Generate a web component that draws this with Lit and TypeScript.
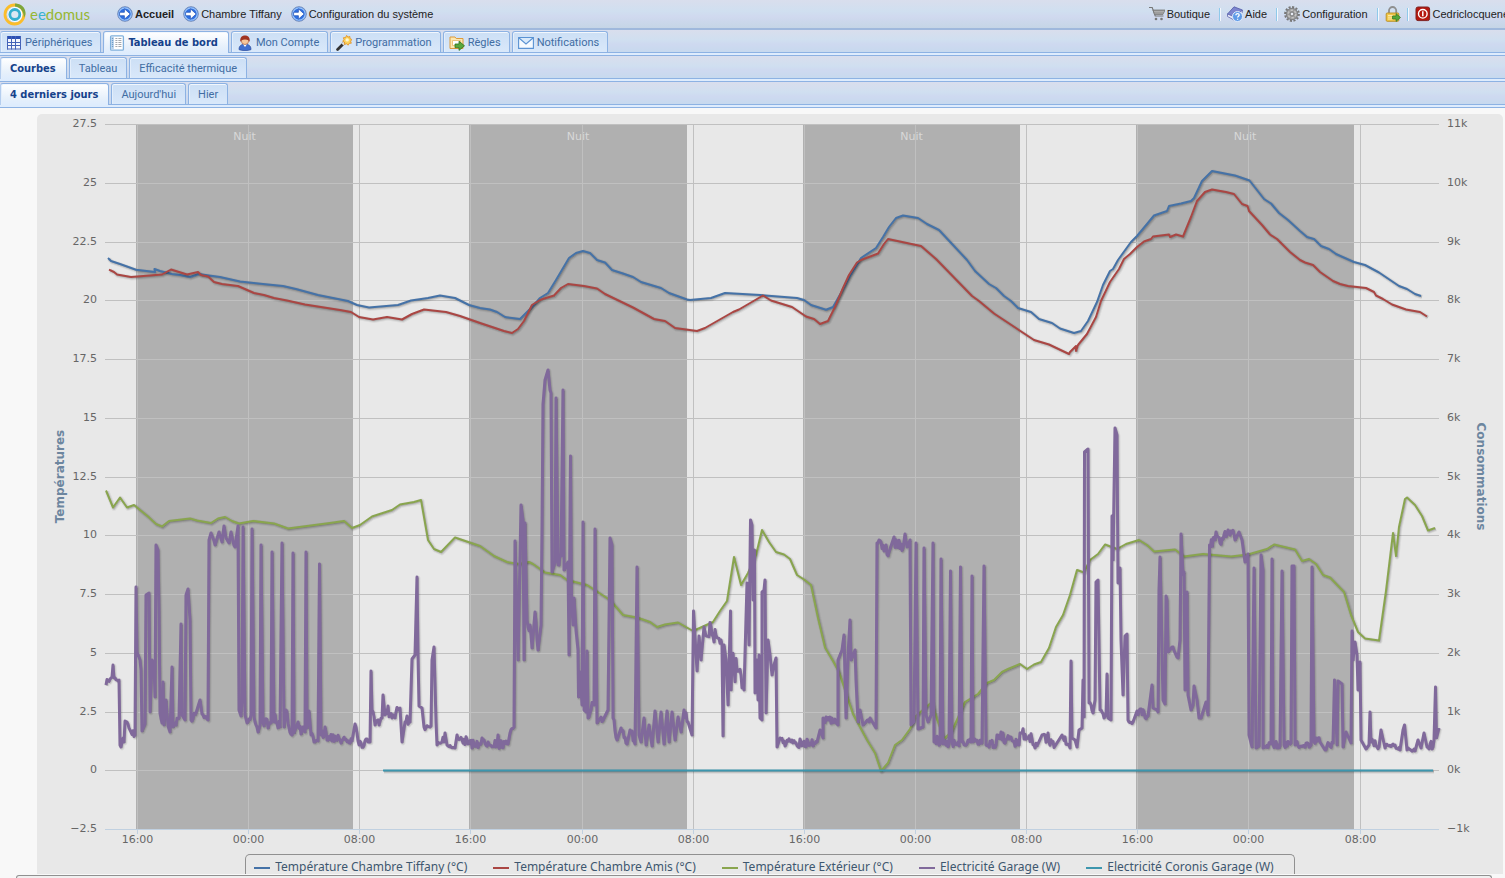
import { LitElement, html, svg, css, TemplateResult } from "lit";
import { customElement, property, state } from "lit/decorators.js";
import { classMap } from "lit/directives/class-map.js";

type Point = [number, number];
/** x, y and, for a restless stretch leading up to the point, its amplitude. */
type Sample = [number, number, number?];

/* Recorder grid in which every series is stored. */
const GRID = { left: 105, right: 1439, top: 124, bottom: 829 };

const parse = (text: string): Sample[] =>
  text
    .trim()
    .split(/\s+/)
    .map((p) => p.split(",").map(Number) as unknown as Sample);

/** Fills restless stretches with a repeatable jitter. */
function expand(samples: Sample[]): Point[] {
  let seed = 7;
  const random = () => {
    seed = (seed * 16807) % 2147483647;
    return seed / 2147483647;
  };
  const out: Point[] = [];
  let px = samples[0][0];
  let py = samples[0][1];
  for (const [x, y, amp] of samples) {
    if (amp) {
      const steps = Math.max(1, Math.round(x - px));
      for (let i = 1; i < steps; i++) {
        const k = i / steps;
        const r = random() * 2 - 1;
        const lift = random() > 0.88 ? amp : 0;
        out.push([px + (x - px) * k, py + (y - py) * k + r * amp - lift]);
      }
    }
    out.push([x, y]);
    px = x;
    py = y;
  }
  return out;
}

const TIFFANY = `108,258 111,261 120,264 127,266.5 136,269.7 155,272 154.5,269 160,271 172,274 180,275 190,277 199,274
209,275.5 220,277 240,281.5 263,284 283,286 296,289 318,295 348,301 357,305 369,307.5 398,305 411,300.5 428,298
440,295.5 455,298 469,305 480,308 490,309.5 497,312 505,317 520,319 527,312 533,306 540,298 548,293 556,280 569,258
576,253 583,251 590,253 597,260 605,262.5 612,270 623,273.5 633,277 641,282 661,288 669,293 687,299.5 690,300 711,298
725,293 760,295 797,298 804,300 811,305 826,309.7 833,307 841,293 850,276 861,258 876,248 883,237 889,227 896,218
903,215.5 918,218 927,224 939,230 953,245 967,260 975,271 989,284 996,288 1004,296 1011,301 1018,308 1031,312
1039,319 1052,323 1060,328.5 1074,333 1081,331 1088,321 1097,302 1103,285 1110,271 1113,269 1118,260 1131,242
1137,236 1147,224 1154,215.5 1167,211 1169,206 1181,203.5 1191,201 1194,198 1202,181 1205,178 1212,171 1235,175.5
1249.5,180.5 1264,199 1271,203.5 1279,213 1288,220 1300,231 1307,237 1314,239 1321,246 1329,249 1336,254 1354,262
1365,265 1379,272.5 1399,286 1407,289 1415,294 1421,296`;

const AMIS = `109,269.7 114,272 117,274.5 131,277 162,274.5 171,269.5 187,274.5 198,272 201,275 208,276.5 214,282 222,284
238,286 246,289.5 254,293 264,295 274,298 287,300.5 305,304.5 340,310 351,312 359,317 373,319.5 387,317 402,319.5
412,314 424,309.5 446,312 460,316 480,323 504,331 512,333 518,329 524,321 532,305 540,300 546,298 554,295.5 561,288
568,284 584,286 597,288.5 605,294 633,307.5 654,319 665,321 675,328 697,331 705,328 733,312 739,309.5 763,295.5
771,300.5 792,307 806,316.5 814,319 820,324 828,321 835,307 843,288 849,275 857,262.5 861,260 878,253.5 884,244
888,239 921,246 936,259 972,296 979,301 994,313.5 1034,340 1049,344.5 1069,354 1070,352 1076,346 1076,351 1078,345
1087,334 1096,317 1101,301 1110,282 1119,269 1124,259 1130,254 1137,247 1144,241.5 1151,239 1153,236.5 1169,234.5
1170,237 1176,234.5 1183,236.5 1191,217 1197,201 1205,192 1212,189.5 1226,192 1234,194 1242,204 1247.5,206 1249,211
1262,225 1270,234.5 1277,239 1290,252 1300,260 1305,262.5 1313,265 1320,272 1333,281 1340,284 1348,286 1366,288
1374,292 1376,295.5 1383,299 1392,304.5 1406,309.5 1420,312 1427,316.5`;

const EXTERIEUR = `106,490.5 113,507.5 120,497.5 127,507.5 134,505 148,516.5 156,524 162,526.5 169,521 190,518.5
197,520.5 211,523 218,518.5 225,517 232,521 239,523.5 253,521 274,523.5 288,528.5 330,523 344,521 352,528 360,525
372,516.5 392,510 400,504.5 414,502 421,500 428,540 434,549 441,552 455,537.5 480,546 494,556 507,562 519,564 529,562
533,564 545,572.5 560,575 567,580 587,585 610,600 623,615 637,617.5 650,622 657,627 665,624.5 678,622.5 693,631
713,622 720,611 727,601 734,557 741,585 748,573 756,555 762,530 769,542 776,552 784,554.5 790,559 797,575 804,579.5
811,585 818,618 825,647.5 833,661 839,672 846,693 853,714 860,727 867,740 875,753 881,771 888,763 895,745 902,740
910,729 916,716 932,702 937,719 944,739 952,731 965,702 978,694 987,683 994,680 1002,672 1008,669 1020,664 1027,669
1034,664.5 1041,662 1049,648 1056,627 1063,615 1070,595 1077,570 1084,572.5 1090,560 1098,554 1105,544.5 1117,549
1126,544 1139,540 1147,545 1154,551.5 1175,549.5 1184,556.5 1203,554 1231,556.5 1248,554.5 1267,549 1274,544.5
1295,549.5 1302,561 1309,559 1316,564 1323,575 1330,577.5 1344,592 1351,615 1358,632 1365,638.5 1379,640.5 1386,591
1393,533 1396,556 1399,527 1405,499 1407,497.5 1415,505 1422,516 1428,530.5 1435,528`;

const GARAGE = `106,685 110,679,2 112,677 113,665 114,678 119,680,2 120,745 121,747 123,738 124,742 125,721 127,722
130,730,2 135,735,3 136,587 137,652 140,660 141,670 142,731 145,724 146,595 149,593 150,712 152,660 154,665 155,697
156,545 158,550 159,610 160,713 162,723,2 163,682 164,725 166,700 168,726 170,732 172,667 173,727 179,718,4 181,624
182,715 185,720 186,595 188,589 190,620 191,720 196,713,3 200,700 202,714 208,720,2 209,540 211,533 215,545,3 219,532
222,542 224,526 226,538 229,543 231,532 235,547,3 238,526 239,710 241,716 242,700 243,527 245,715 247,723 251,715,3
252,529 254,717 258,732,3 260,725 261,545 263,723 271,723,5 272,552 274,722 280,727,5 282,543 284,727 286,710
289,728,5 292,735,4 293,553 294,733 298,722 301,734,3 305,732,3 306,552 307,728 309,711 311,735 314,742,2 318,741,2
319.5,564 321,735 352,741,5 355,724 359,745,4 368,742,4 370,742 371,671 372,710 375,725,4 382,718,4 383,695 385,715
392,718,6 398,710,4 400,708 402,742 405,722 410,722,4 412,659 415,655 417,577 418,655 419,706 422,708 424,727
431,726,3 432,660 434,647 436,722 437,745 444,742,4 445,733 447,745 455,748,1 457,735 468,744,4 488,742,5 500,744,5
508,744,4 510,733 514,727,2 515,541 518,660 521,505 523,520 524,660 525,523 527,620 531,635,8 532,648 535,612
538,650,6 541,625 542,530 543,404 545,380 548,370 550,390 551,393 552,572 555,562 556,398 558,565 561,556,5 563,390
564,570 568,562 569,655 570.5,456 571.5,600 573,625 574,598 576,630 578,650 578.5,697 580,672 582,705 583,522 584,710
586,712 587,651 588,718 593,704,5 594,705 595,529 597,723 604,718,3 608,710 610,538 612,545 613,718 617,740,3 621,728
627,744,3 630,730 635,744,3 637,567 639,735 641,742 644,718 646,745 649,725 652,746 655,711 658,742 661,712 664,744
667,711 669,742 672,712 675,740 678,717 681,732 684,710 688,722,7 692,735 693.5,611 697,671 699,636 701,660 704,627
721,640,10 722,645 723,736 724,645 726,660 728,705 730.5,611 731,690 732,660 739,670,20 744,690,8 747,583 749,645
750.5,520 752,525 753,600 754.5,550 755,693 757,660 758,700 759,655 760,718 762,720 762,592 764,590 765,580 766,713
768,640 770,655 772,675 774,665 776,658 777,747 780,738 785,746,4 792,740,5 803,744,5 817,742,5 820,730 823,738
823,718 836,723,4 838,725 838,660 842,650 844,635 846,718 848,655 850,620 851,660 855,650 856,680 858,722 860,710
863,725 870,718,3 876,728 877,543 889,552,5 893,540 903,548,6 905,534 907,547,2 910,540 911,725 914,722 916,543
918,729 923,727 924,548 926,715 928,722 931,715 933,543 934,742 940,744,4 941,559 943,744 949,744,4 950.5,571 952,742
959,746,4 960.5,567 962,742 971,742,4 972,576 973,742 982,743,4 984,566 986,745 996,745,3 997,735 1019,745,5 1020,733
1037,746,4 1042,735 1055,746,4 1062,735 1070,748,3 1071,661 1072,738 1075,740 1077,747 1079,730 1082,728 1083,680
1084,717 1084.5,452 1088,449 1089,703 1093,713,3 1095,700 1096,582 1098,580 1100,710 1104,718,3 1106,715 1107,674
1108,718 1111,720 1112,516 1113,560 1115,428 1117,435 1118,583 1120,568 1121,640 1123,695 1125,636 1127,634 1128,720
1133,722,3 1137,711 1148,716,4 1152,685 1153,708 1157,710 1158,712 1159,590 1160,557 1161,600 1162,655 1163,700
1165,704 1166,596 1167,600 1168,652 1172,647 1178,658,2 1180,640 1181,534 1183,575 1184,572 1185,690 1187,592
1188,695 1191,710 1193,705 1194,686 1197,700 1199,718 1201,718 1206,702 1208,715 1209.5,545 1215,540,4 1216,532
1220,543,3 1228,530,4 1236,538,4 1239,532 1242,540 1245,562 1248,554 1249,735 1252,747 1254,568 1256,748 1259,746
1261,555 1263,570 1263,748 1271,744,3 1272,559 1273,744 1280,746,4 1282,571 1284,745 1291,743,3 1292,566 1294,566
1295,745 1311,745,3 1312,567 1314,742 1320,742,4 1325,750 1333,743,3 1334.5,680 1337,745 1338,681 1342,684 1343,747
1346,732 1351,743 1352,631 1353,660 1355,642 1357,655 1358,690 1360,662 1361,740 1366,749 1369,745 1370,712 1371,742
1379,747,3 1381,730 1385,748 1393,744,3 1400,750,2 1403,730 1404.5,725 1407,750 1415,751,2 1418,740 1421,748 1424,733
1427,747 1433,747,3 1434,740 1435.5,687 1436.5,738 1439,728`;

const SERIES = [
  { name: "Température Chambre Tiffany (°C)", color: "#4572a7", width: 2, points: expand(parse(TIFFANY)) },
  { name: "Température Chambre Amis (°C)", color: "#aa4643", width: 2, points: expand(parse(AMIS)) },
  { name: "Température Extérieur (°C)", color: "#89a54e", width: 2, points: expand(parse(EXTERIEUR)) },
  { name: "Electricité Garage (W)", color: "#80699b", width: 3, points: expand(parse(GARAGE)) },
  { name: "Electricité Coronis Garage (W)", color: "#3d96ae", width: 2, points: expand(parse("383,770.5 1433,770.5")) },
];

const NIGHTS: Point[] = [[136, 353], [469, 687], [803, 1020], [1136, 1354]];
const HOURS = ["16:00", "00:00", "08:00"];
const LEFT_TICKS = ["27.5", "25", "22.5", "20", "17.5", "15", "12.5", "10", "7.5", "5", "2.5", "0", "−2.5"];
const RIGHT_TICKS = ["11k", "10k", "9k", "8k", "7k", "6k", "5k", "4k", "3k", "2k", "1k", "0k", "−1k"];
const SHADOW = [[5, 0.05], [3, 0.1], [1, 0.15]];

@customElement("temperature-chart")
export class TemperatureChart extends LitElement {
  @state() private width = 1466;
  @state() private height = 740;
  private observer?: ResizeObserver;

  static styles = css`
    :host {
      display: flex;
      flex-direction: column;
      min-height: 0;
      background: #e8e8e8;
      border-radius: 5px 5px 0 0;
      font-family: "DejaVu Sans", Verdana, sans-serif;
    }
    .plot {
      flex: 1;
      min-height: 0;
      overflow: hidden;
    }
    svg {
      display: block;
    }
    .night { fill: #b0b0b0; }
    .grid { stroke: #c0c0c0; shape-rendering: crispEdges; }
    .axis { stroke: #c0d0e0; shape-rendering: crispEdges; }
    .tick { font-size: 11px; fill: #666; }
    .night-label { font-size: 11px; fill: #d8d8d8; text-anchor: middle; }
    .end { text-anchor: end; }
    .middle { text-anchor: middle; }
    .title { font-size: 12px; font-weight: bold; fill: #6d869f; text-anchor: middle; }
    .line, .shade { fill: none; stroke-linejoin: round; }
    .shade { stroke: #000; }
    .legend {
      display: flex;
      align-self: center;
      gap: 26px;
      margin: 0;
      padding: 5px 20px 0 8px;
      border: 1px solid #909090;
      border-bottom: 0;
      border-radius: 5px 5px 0 0;
      list-style: none;
      font: 12px/14px "Noto Sans", "Open Sans", sans-serif;
      color: #3e576f;
      white-space: nowrap;
    }
    .entry {
      display: flex;
      gap: 5px;
    }
    .swatch {
      width: 16px;
      height: 14px;
    }
  `;

  firstUpdated() {
    const plot = this.renderRoot.querySelector(".plot")!;
    this.observer = new ResizeObserver(([entry]) => {
      this.width = entry.contentRect.width;
      this.height = entry.contentRect.height;
    });
    this.observer.observe(plot);
  }

  disconnectedCallback() {
    super.disconnectedCallback();
    this.observer?.disconnect();
  }

  render() {
    const left = 68;
    const right = this.width - 64;
    const top = 10;
    const bottom = this.height - 25;
    const sx = (right - left) / (GRID.right - GRID.left);
    const sy = (bottom - top) / (GRID.bottom - GRID.top);
    const x = (v: number) => left + (v - GRID.left) * sx;
    const y = (v: number) => top + (v - GRID.top) * sy;
    const rows = LEFT_TICKS.map((_, i) => Math.floor(top + 0.5 + ((bottom - top) * i) / 12) + 0.5);
    const columns = Array.from({ length: 12 }, (_, i) => Math.floor(x(137.4 + i * 111.15)) + 0.5);
    const path = (points: Point[]) =>
      "M" + points.map(([a, b]) => `${x(a).toFixed(1)} ${y(b).toFixed(1)}`).join("L");

    return html`
      <div class="plot">
        <svg width=${this.width} height=${this.height} role="img" aria-label="Températures et consommations">
          ${NIGHTS.map(([a, b]) => svg`
            <rect class="night" x=${x(a)} y=${top} width=${x(b) - x(a)} height=${bottom - top}></rect>
            <text class="night-label" x=${x((a + b) / 2)} y=${top + 16}>Nuit</text>`)}
          ${columns.map((c) => svg`<line class="grid" x1=${c} x2=${c} y1=${top} y2=${bottom}></line>`)}
          ${rows.map((r) => svg`<line class="grid" x1=${left} x2=${right} y1=${r} y2=${r}></line>`)}
          <line class="axis" x1=${left} x2=${right} y1=${rows[12]} y2=${rows[12]}></line>
          ${columns.map((c, i) => svg`
            <line class="axis" x1=${c} x2=${c} y1=${bottom} y2=${bottom + 5}></line>
            <text class="tick middle" x=${c} y=${bottom + 14}>${HOURS[i % 3]}</text>`)}
          ${rows.map((r, i) => svg`
            <text class="tick end" x=${left - 8} y=${Math.floor(r) + 3}>${LEFT_TICKS[i]}</text>
            <text class="tick" x=${right + 8} y=${Math.floor(r) + 3}>${RIGHT_TICKS[i]}</text>`)}
          <text class="title" transform="translate(27 ${(top + bottom) / 2}) rotate(-90)">Températures</text>
          <text class="title" transform="translate(${right + 38} ${(top + bottom) / 2}) rotate(90)">Consommations</text>
          ${SERIES.map((s) => {
            const d = path(s.points);
            return svg`
              ${SHADOW.map(([w, o]) => svg`<path class="shade" transform="translate(1 1)" d=${d} stroke-width=${w} stroke-opacity=${o}></path>`)}
              <path class="line" d=${d} stroke=${s.color} stroke-width=${s.width}></path>`;
          })}
        </svg>
      </div>
      <ul class="legend">
        ${SERIES.map((s) => html`
          <li class="entry">
            <svg class="swatch" viewBox="0 0 16 14" aria-hidden="true"><path d="M0 8h16" stroke=${s.color} stroke-width="2" /></svg>
            <span>${s.name}</span>
          </li>`)}
      </ul>
    `;
  }
}

const icon = (body: TemplateResult) =>
  html`<svg width="16" height="16" viewBox="0 0 16 16" fill="none" aria-hidden="true">${body}</svg>`;

const ICONS = {
  arrow: icon(svg`
    <circle cx="8" cy="8" r="7.3" fill="#2f6fe0" stroke="#7a8fb8" />
    <circle cx="8" cy="8" r="6.2" stroke="#9cc6fa" stroke-width="1.2" />
    <path d="M2.600 6.300h4.800V2.800L13.200 8l-5.800 5.200V9.700H2.600z" fill="#fff" stroke="#1d4fb6" stroke-width=".7" />`),
  cart: icon(svg`
    <path d="M0 1.500h3.200l3 8.500h8.300" stroke="#777" stroke-width="1.200" />
    <path d="M4 4h12l-2 4.400H5.600z" fill="#8e8e8e" stroke="#777" stroke-width=".8" />
    <path d="M5 5.400h10M5.500 7h9" stroke="#c8c8c8" stroke-width=".6" />
    <circle cx="7" cy="13" r="1.300" fill="#777" /><circle cx="12.500" cy="13" r="1.300" fill="#777" />`),
  book: icon(svg`
    <path d="M.5 8 7 .8 15.500 4 9 12z" fill="#7c85cf" stroke="#535ba6" stroke-width=".8" />
    <path d="M.5 8v2.500l7.500 4 7.300-8V4L9 11.500z" fill="#e7eaf8" stroke="#5d65ae" stroke-width=".8" />
    <circle cx="10.500" cy="10.500" r="5" fill="#5f9be8" stroke="#dfeafb" />
    <path d="M8.900 9.200c0-2.300 3.300-2.100 3.300-.2 0 1.200-1.600 1.300-1.600 2.600M10.600 12.700v1.100" stroke="#fff" stroke-width="1.300" />`),
  gear: icon(svg`
    <circle cx="8" cy="8" r="6.900" stroke="#777" stroke-width="2" stroke-dasharray="2.100 1.500" />
    <circle cx="8" cy="8" r="5.700" fill="#9c9c9c" stroke="#707070" stroke-width=".8" />
    <circle cx="8" cy="8" r="3.800" stroke="#c2c2c2" stroke-width="1.600" stroke-dasharray="2.400 1.600" />
    <circle cx="8" cy="8" r="1.900" fill="#e8ecf4" stroke="#666" stroke-width=".8" />`),
  lock: icon(svg`
    <path d="M4 8V4.600a3.600 3.600 0 0 1 7.200 0V8" stroke="#8f8f8f" stroke-width="1.800" />
    <rect x="1.200" y="7" width="12.600" height="8.300" rx="1" fill="#f2c84b" stroke="#b98d1f" stroke-width=".9" />
    <path d="M3 9.500h5M3 11.200h5M3 13h5" stroke="#fbe9a8" />
    <path d="M7.500 10h3.600V7.600l4.400 3.900-4.400 3.900V13H7.500z" fill="#55a83b" stroke="#2f7420" stroke-width=".7" />`),
  power: icon(svg`
    <rect x="1" y="1" width="13.600" height="13.600" rx="2" fill="#b5170f" stroke="#7f2320" />
    <circle cx="7.800" cy="7.800" r="4.300" stroke="#fff" stroke-width="1.400" />
    <path d="M7.800 5.300v5" stroke="#fff" stroke-width="1.500" />`),
  grid: icon(svg`
    <rect x="1" y="1" width="14" height="13.500" fill="#f4f7fe" />
    <path d="M1 1h14v3H1z" fill="#2c50b4" />
    <path d="M1.500 1v13.500M5.500 1v13.500M9.500 1v13.500M14.500 1v13.500M1 7.500h14M1 10.500h14M1 14h14" stroke="#4463b8" />`),
  list: icon(svg`
    <rect x="1.600" y=".8" width="12.800" height="14.400" rx="1" fill="#fff" stroke="#7fb0dc" stroke-width="1.300" />
    <path d="M2.200 1.500h2.600v13H2.200z" fill="#b6d0ea" />
    <path d="M6.400 3.500h2M9.400 3.500h3M6.400 5.500h2M9.400 5.500h3M6.400 7.500h2M9.400 7.500h3M6.400 9.500h2M9.400 9.500h3M6.400 11.500h2M9.400 11.500h3" stroke="#a3a7ad" />
    <path d="M2.900 3.500h1.300M2.900 5.500h1.300M2.900 7.500h1.300M2.900 9.500h1.300M2.900 11.500h1.300" stroke="#6e9cc8" />`),
  user: icon(svg`
    <path d="M2 14.600c0-4 2.400-5.400 6-5.400s6 1.400 6 5.400c-3 1.400-9 1.400-12 0z" fill="#3f6fd0" stroke="#2a4b9b" stroke-width=".7" />
    <path d="m6 9.300 2 2.600 2-2.600z" fill="#fff" />
    <circle cx="8" cy="5.800" r="3.700" fill="#f6c79c" stroke="#a2512f" stroke-width=".6" />
    <path d="M3.400 7C2.600 2 5.500.6 8 .6s5.400 1.400 4.600 6.400c-.6-1.600-1.600-2.600-4.600-2.600S4 5.400 3.400 7z" fill="#a03423" />`),
  wand: icon(svg`
    <path d="m1.600 14.400 7-7" stroke="#333" stroke-width="2.800" stroke-linecap="round" />
    <path d="m6.500 9.500 2-2" stroke="#ddd" stroke-width="2.600" />
    <path d="m10.600.4 1.300 1.700 2-.6.100 2.100 1.900.9-1.300 1.700.7 2-2.100.1-1 1.900-1.600-1.400-2 .6-.1-2.100-1.800-1 1.300-1.600-.6-2 2.100-.1z" fill="#fbd25a" stroke="#e38d1c" stroke-width=".8" />
    <circle cx="11.200" cy="4.900" r="1.700" fill="#fff6cf" />`),
  folder: icon(svg`
    <path d="M1 13.500V2h5l1.200 1.500H14v10z" fill="#fce8b2" stroke="#dc9b3c" />
    <path d="M3.500 5.500h8v5h-8z" fill="#fff" stroke="#e9b765" stroke-width=".8" />
    <path d="M6 9h4V6.200l5.500 4.600-5.500 4.600v-2.800H6z" fill="#5aa83d" stroke="#2f7420" stroke-width=".8" />`),
  mail: icon(svg`
    <path d="M.6 2.600h14.800v10.800H.6z" fill="#f5faff" stroke="#5b93d3" stroke-width="1.100" />
    <path d="M1 3l7 6 7-6" fill="#d9eafb" stroke="#5b93d3" stroke-width="1.100" />`),
};

interface Tab {
  label: string;
  icon?: TemplateResult;
}

@customElement("tab-strip")
export class TabStrip extends LitElement {
  @property({ attribute: false }) tabs: Tab[] = [];
  @property({ type: Number }) active = 0;

  static styles = css`
    :host {
      display: block;
      border-bottom: 1px solid #8db2e3;
      background: #deecfd;
      padding-bottom: 2px;
    }
    .strip {
      display: flex;
      gap: 2px;
      height: 23px;
      box-sizing: border-box;
      padding-top: 1px;
      border-bottom: 1px solid #8db2e3;
      background: linear-gradient(#d9deed, #d0dff0 45%, #ced9f0 65%, #c7d9ee);
    }
    .tab {
      display: flex;
      align-items: center;
      gap: 3px;
      height: 21px;
      box-sizing: border-box;
      padding: 1px 9px 0;
      border: 1px solid #8db2e3;
      border-bottom: 0;
      border-radius: 3px 3px 0 0;
      background: linear-gradient(#ccdff5, #d9e8fa);
      box-shadow: inset 0 1px #f2f7fd, inset 1px 0 #e3eefb;
      color: #416da3;
      font: 11px/20px Roboto, Tahoma, sans-serif;
      white-space: nowrap;
      cursor: pointer;
    }
    .tab:first-child {
      border-left-color: #b4cdee;
    }
    .with-icon {
      padding-left: 5px;
      padding-right: 8px;
    }
    .active {
      height: 22px;
      padding-top: 0;
      padding-right: 10px;
      background: linear-gradient(#fff, #e6f0fb 70%, #deecfd);
      color: #15428b;
      font: bold 11px/20px "DejaVu Sans Condensed", "DejaVu Sans", Tahoma, sans-serif;
      font-stretch: condensed;
    }
  `;

  render() {
    return html`<div class="strip" role="tablist">
      ${this.tabs.map((tab, i) => html`
        <button
          type="button"
          role="tab"
          aria-selected=${i === this.active}
          class=${classMap({ tab: true, active: i === this.active, "with-icon": !!tab.icon })}
          @click=${() => (this.active = i)}
        >${tab.icon}<span>${tab.label}</span></button>`)}
    </div>`;
  }
}

@customElement("app-root")
export class AppRoot extends LitElement {
  static styles = css`
    :host {
      display: flex;
      flex-direction: column;
      height: 100vh;
      overflow: hidden;
      background: #f8f8f8;
    }
    .header {
      display: flex;
      align-items: center;
      flex: none;
      height: 28px;
      border-bottom: 2px solid #9fb8dc;
      background: linear-gradient(#d9deed, #d0dff0 40%, #d0d9ef 60%, #c5d5e6);
      font: 11px/16px "Liberation Sans", Arial, sans-serif;
      white-space: nowrap;
    }
    .logo {
      display: flex;
      align-items: center;
      gap: 3px;
      width: 114px;
      padding-left: 3px;
      box-sizing: border-box;
      color: #96b732;
      font: 15px/24px Lato, sans-serif;
      text-decoration: none;
    }
    .accent { color: #39b3cf; }
    .links {
      display: flex;
      gap: 9px;
      padding-left: 3px;
    }
    .link {
      display: flex;
      align-items: center;
      gap: 2px;
      color: #222;
      text-decoration: none;
    }
    .current { font-weight: bold; }
    .tools {
      display: flex;
      align-items: center;
      gap: 6px;
      flex: none;
      margin: 0 -4px 0 auto;
    }
    .rule {
      width: 1px;
      height: 13px;
      margin-left: 3px;
      background: #8fc9ea;
      border-right: 1px solid #f4f8fd;
    }
    .bare { margin-right: -3px; }
    tab-strip { flex: none; }
    temperature-chart {
      flex: 1;
      margin: 6px 2px 0 37px;
    }
    .next {
      flex: none;
      height: 2px;
      margin: 1px 13px 0 16px;
      border: 1px solid #909090;
      border-bottom: 0;
      border-radius: 4px 4px 0 0;
      background: #f0f0f0;
    }
  `;

  render() {
    const link = (name: string, glyph: TemplateResult, extra = "") =>
      html`<a class="link ${extra}" href="#">${glyph}<span>${name}</span></a>`;
    const rule = html`<span class="rule"></span>`;
    return html`
      <header class="header">
        <a class="logo" href="#" aria-label="eedomus">
          <svg width="24" height="24" viewBox="0 0 24 24" fill="none" aria-hidden="true">
            <circle cx="11.500" cy="12.500" r="9.500" stroke="#fbbd2a" stroke-width="2.800" />
            <circle cx="12" cy="12.500" r="7.400" fill="#fff" />
            <path d="M12 1.500c6 0 10.500 4 10.500 9.500 0 2-.8 3.500-1.600 4.500C21 9.500 18 5.500 12 4.500z" fill="#7ea63a" />
            <circle cx="11.800" cy="12.500" r="5" fill="#dbe7f3" stroke="#35afd0" stroke-width="2.800" />
          </svg>
          <span>e<span class="accent">e</span>domus</span>
        </a>
        <nav class="links">
          ${link("Accueil", ICONS.arrow, "current")}
          ${link("Chambre Tiffany", ICONS.arrow)}
          ${link("Configuration du système", ICONS.arrow)}
        </nav>
        <nav class="tools">
          ${link("Boutique", ICONS.cart)}${rule}
          ${link("Aide", ICONS.book)}${rule}
          ${link("Configuration", ICONS.gear)}${rule}
          <a class="link bare" href="#" aria-label="Verrouiller">${ICONS.lock}</a>${rule}
          ${link("Cedriclocquene", ICONS.power)}
        </nav>
      </header>
      <tab-strip
        .active=${1}
        .tabs=${[
          { label: "Périphériques", icon: ICONS.grid },
          { label: "Tableau de bord", icon: ICONS.list },
          { label: "Mon Compte", icon: ICONS.user },
          { label: "Programmation", icon: ICONS.wand },
          { label: "Règles", icon: ICONS.folder },
          { label: "Notifications", icon: ICONS.mail },
        ]}
      ></tab-strip>
      <tab-strip .tabs=${[{ label: "Courbes" }, { label: "Tableau" }, { label: "Efficacité thermique" }]}></tab-strip>
      <tab-strip .tabs=${[{ label: "4 derniers jours" }, { label: "Aujourd'hui" }, { label: "Hier" }]}></tab-strip>
      <temperature-chart></temperature-chart>
      <div class="next"></div>
    `;
  }
}
